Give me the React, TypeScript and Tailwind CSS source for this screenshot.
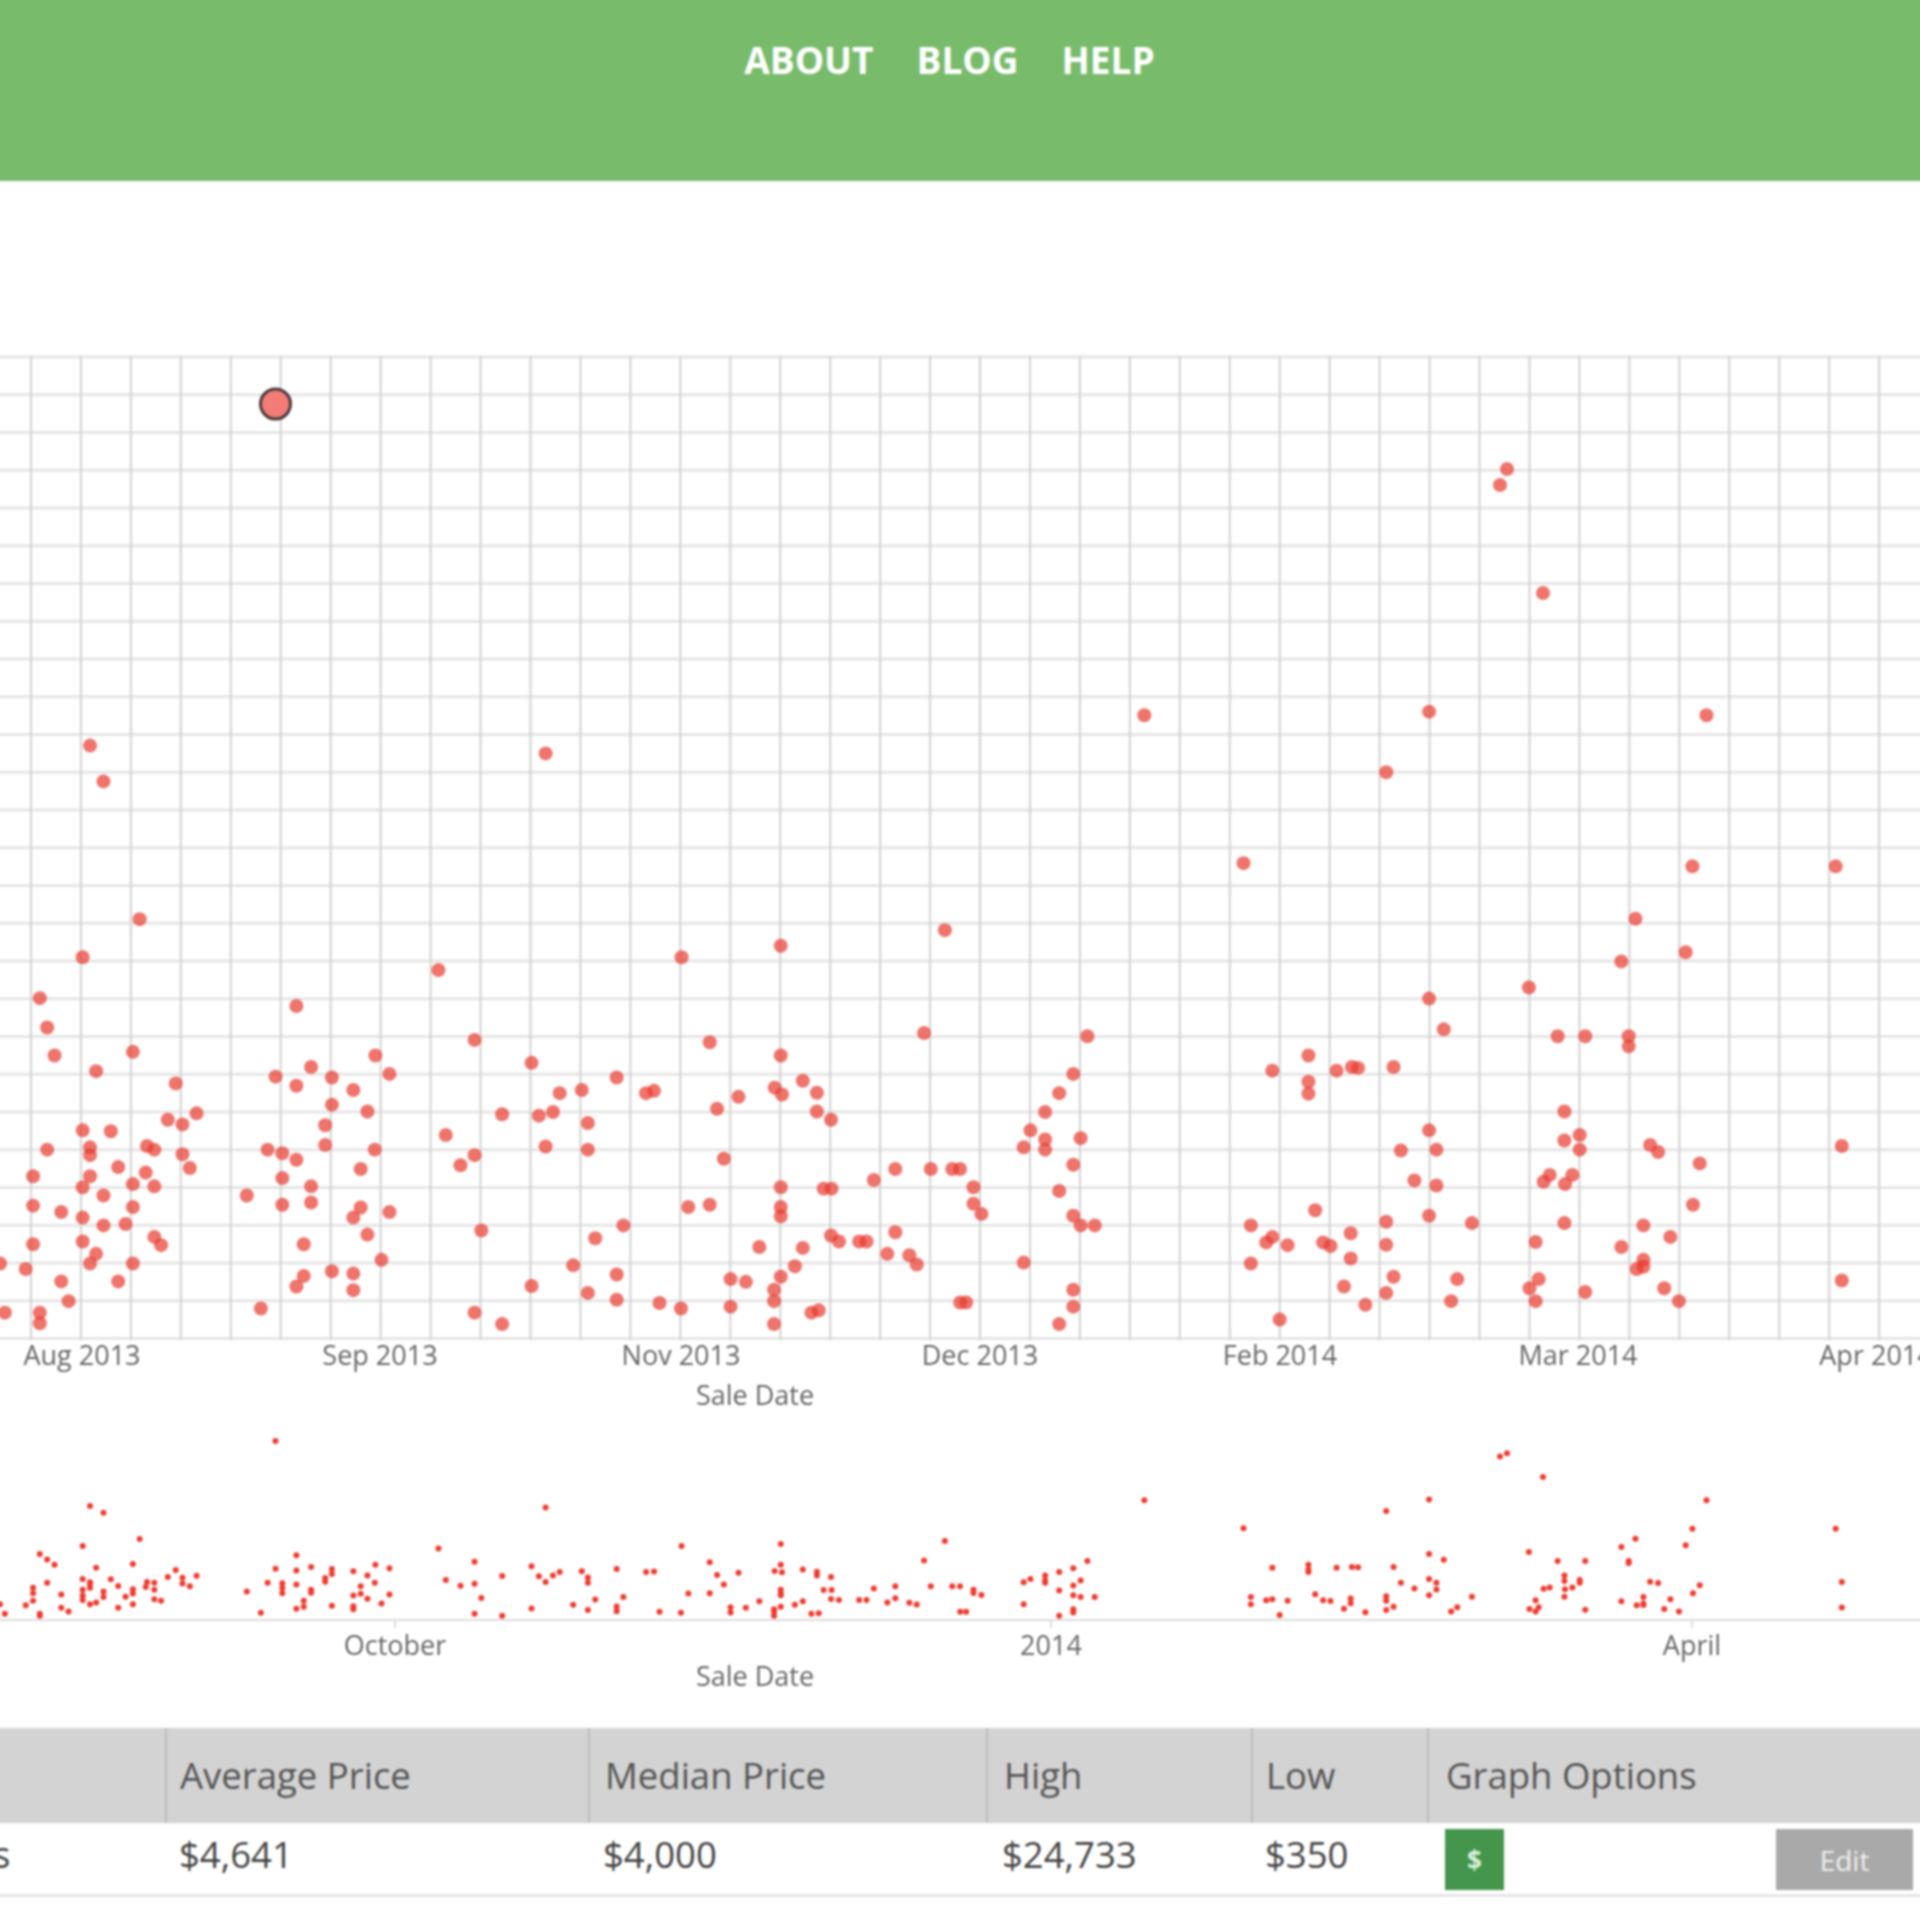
const font = "font-['Open_Sans',sans-serif]";

// dot positions as read off the two halves of the plot, scaled back to page pixels below
const leftHalf = [
  [147,230],[169,308],[891,247],[228,608],[135,691],[1275,666],[1113,691],[1543,632],[716,719],[65,780],[484,797],[77,844],[89,905],[217,897],[157,939],[775,871],[1159,876],[1509,856],[1275,905],[868,921],[613,905],[636,945],[508,930],[450,951],[542,953],[484,971],[577,980],[287,966],[1007,953],[950,980],[914,987],[1068,982],[1055,987],[1265,975],[1277,990],[1311,960],[1334,986],[542,1012],[600,1027],[274,1045],[298,1055],[321,1031],[820,1033],[880,1036],[903,1028],[1171,1021],[1206,995],[960,1052],[1334,1027],[1357,1045],[531,1057],[135,1068],[181,1070],[728,1078],[531,1100],[77,1110],[147,1105],[240,1102],[252,1110],[437,1110],[461,1118],[484,1132],[612,1110],[891,1103],[960,1110],[298,1120],[147,1122],[775,1122],[752,1144],[1182,1130],[310,1150],[193,1148],[589,1152],[54,1168],[147,1168],[238,1160],[461,1172],[135,1192],[217,1185],[252,1190],[508,1190],[169,1210],[403,1210],[1275,1192],[1345,1195],[1358,1195],[1427,1176],[1462,1152],[1520,1152],[1555,1152],[54,1232],[217,1235],[461,1230],[508,1225],[1124,1235],[1159,1230],[1275,1235],[1275,1255],[100,1246],[135,1258],[169,1275],[205,1272],[636,1246],[589,1236],[577,1258],[786,1286],[1018,1275],[600,1295],[54,1316],[135,1310],[252,1300],[263,1318],[496,1316],[972,1303],[1357,1297],[1370,1310],[1403,1310],[1415,1310],[1462,1290],[1240,1322],[1311,1324],[157,1337],[147,1358],[217,1358],[42,1370],[623,1350],[936,1362],[1449,1337],[1485,1340],[1497,1360],[1298,1364],[0,1358],[100,1397],[193,1397],[496,1385],[484,1408],[542,1375],[577,1380],[577,1416],[1007,1382],[868,1407],[1193,1392],[1218,1398],[1275,1387],[1264,1415],[1264,1440],[112,1440],[8,1465],[65,1465],[65,1488],[426,1456],[775,1465],[820,1490],[960,1422],[1007,1437],[1077,1444],[1112,1456],[1193,1452],[1264,1490],[1325,1465],[1337,1460],[1568,1443],
];
const rightHalf = [
  [301,164],[766,156],[1219,164],[696,288],[463,486],[1196,493],[1430,493],[1103,607],[1185,680],[1080,700],[929,757],[766,781],[790,848],[208,863],[976,863],[1021,863],[1092,863],[1092,885],[569,905],[185,945],[510,938],[615,938],[640,930],[650,932],[708,930],[569,962],[569,988],[162,987],[139,1028],[987,1027],[115,1068],[139,1088],[139,1110],[104,1105],[197,1085],[766,1068],[1012,1078],[987,1090],[1012,1110],[720,1112],[778,1110],[1127,1100],[1140,1115],[1440,1102],[185,1143],[1208,1140],[742,1177],[778,1188],[963,1165],[953,1180],[1000,1165],[988,1185],[22,1192],[162,1200],[0,1152],[22,1228],[35,1250],[185,1254],[197,1275],[220,1275],[580,1242],[475,1275],[766,1254],[696,1267],[836,1270],[987,1270],[1116,1275],[1197,1230],[638,1292],[510,1300],[500,1312],[535,1318],[593,1312],[605,1320],[696,1317],[940,1311],[1160,1300],[1080,1322],[638,1347],[104,1356],[475,1358],[1116,1350],[1105,1370],[1116,1365],[708,1387],[812,1392],[945,1392],[930,1412],[1440,1395],[185,1415],[627,1408],[1150,1412],[696,1422],[1021,1420],[940,1440],[10,1443],[185,1452],[662,1448],[802,1440],[1174,1440],[522,1480],[162,1490],
];

const dots = [
  ...leftHalf.map(([x, y]) => [x / 1.633, 640 + y / 2.178]),
  ...rightHalf.map(([x, y]) => [960 + x / 1.633, 640 + y / 2.178]),
  [1507, 469],
  [1500, 485],
  [1543, 593],
];
const peak = [275.5, 404];

const toMiniY = (y: number) => 1441 + (y - 404) * 0.19;

const hLines = Array.from({ length: 27 }, (_, i) => 357 + i * 37.75);
const vLines = Array.from({ length: 38 }, (_, i) => 31 + i * 49.95);

const ticks = [
  ["Aug 2013", 82],
  ["Sep 2013", 380],
  ["Nov 2013", 681],
  ["Dec 2013", 980],
  ["Feb 2014", 1280],
  ["Mar 2014", 1578],
  ["Apr 2014", 1876],
] as const;

const miniTicks = [
  ["October", 395],
  ["2014", 1051],
  ["April", 1692],
] as const;

function MainChart() {
  return (
    <svg viewBox="0 356 1920 1060" className="mx-[8px] block h-[1060px] w-[1920px] overflow-visible">
      {hLines.map((y) => (
        <line key={y} x1={-8} x2={1928} y1={y} y2={y} stroke="#e6e6e6" strokeWidth={3} />
      ))}
      {vLines.map((x) => (
        <line key={x} x1={x} x2={x} y1={356} y2={1340} stroke="#d2d2d2" strokeWidth={2} />
      ))}
      {dots.map(([x, y], i) => (
        <circle key={i} cx={x} cy={y} r={7} fill="#e8392e" fillOpacity={0.7} />
      ))}
      <circle cx={peak[0]} cy={peak[1]} r={15} fill="#f47c76" stroke="#4a3a3a" strokeWidth={3} />
      {ticks.map(([label, x]) => (
        <text key={label} x={x} y={1365} textAnchor="middle" fontSize={27} fill="#666">
          {label}
        </text>
      ))}
      <text x={755} y={1405} textAnchor="middle" fontSize={27} fill="#666">
        Sale Date
      </text>
    </svg>
  );
}

function MiniChart() {
  return (
    <svg viewBox="0 1416 1920 312" className="mx-[8px] block h-[312px] w-[1920px] overflow-visible">
      {dots.map(([x, y], i) => (
        <circle key={i} cx={x} cy={toMiniY(y)} r={3} fill="#ee3b30" />
      ))}
      <circle cx={peak[0]} cy={1441} r={3} fill="#ee3b30" />
      <line x1={-8} x2={1928} y1={1620} y2={1620} stroke="#dddddd" strokeWidth={2} />
      {miniTicks.map(([label, x]) => (
        <g key={label}>
          <line x1={x} x2={x} y1={1620} y2={1628} stroke="#dddddd" strokeWidth={2} />
          <text x={x} y={1655} textAnchor="middle" fontSize={27} fill="#666">
            {label}
          </text>
        </g>
      ))}
      <text x={755} y={1686} textAnchor="middle" fontSize={27} fill="#666">
        Sale Date
      </text>
    </svg>
  );
}

function StatsTable() {
  const head = "flex h-[95px] items-center border-l-2 border-[#bcbcbc] bg-[#d3d3d3] text-[#555]";
  const cell = "flex items-center pb-[8px] font-medium";
  return (
    <div className="grid grid-cols-[173px_423px_398px_265px_176px_501px] text-[36.5px] leading-none">
      <div className="h-[95px] bg-[#d3d3d3]" />
      <div className={`${head} pl-[13px]`}>Average Price</div>
      <div className={`${head} pl-[15px]`}>Median Price</div>
      <div className={`${head} pl-[16px]`}>High</div>
      <div className={`${head} pl-[13px]`}>Low</div>
      <div className={`${head} pl-[17px]`}>Graph Options</div>
      <div className="col-span-6 grid h-[74px] grid-cols-[173px_423px_398px_265px_176px_501px] border-b-[3px] border-[#e6e6e6] text-[#444]">
        <div className="flex items-center pb-[8px] pl-[1px] font-medium">s</div>
        <div className={`${cell} pl-[14px]`}>$4,641</div>
        <div className={`${cell} pl-[15px]`}>$4,000</div>
        <div className={`${cell} pl-[16px]`}>$24,733</div>
        <div className={`${cell} pl-[14px]`}>$350</div>
        <div className="flex items-start justify-between pr-[15px] pl-[18px] pt-[6px]">
          <button
            type="button"
            className="flex h-[61px] w-[59px] items-center justify-center bg-[#43964c] text-[26px] font-bold text-[#dcefdc]"
          >
            $
          </button>
          <button
            type="button"
            className="flex h-[61px] w-[137px] items-center justify-center bg-[#a9a9a9] text-[28px] text-[#efefef]"
          >
            Edit
          </button>
        </div>
      </div>
    </div>
  );
}

export default function App() {
  return (
    <div className="h-[1920px] w-[1920px] overflow-hidden bg-white">
      {/* the blurred layer runs 8px past the page on each side so its soft edge stays out of view */}
      <div className={`${font} -mt-[8px] -ml-[8px] h-[1936px] w-[1936px] bg-white blur-[1px]`}>
        <header className="flex h-[189px] justify-center gap-[43px] bg-[#77bb6b] pr-[21px] pt-[48px] text-[37px] leading-[40px] font-bold text-white">
          <a>ABOUT</a>
          <a>BLOG</a>
          <a>HELP</a>
        </header>
        <div className="mt-[175px]">
          <MainChart />
          <MiniChart />
          <StatsTable />
        </div>
      </div>
    </div>
  );
}
